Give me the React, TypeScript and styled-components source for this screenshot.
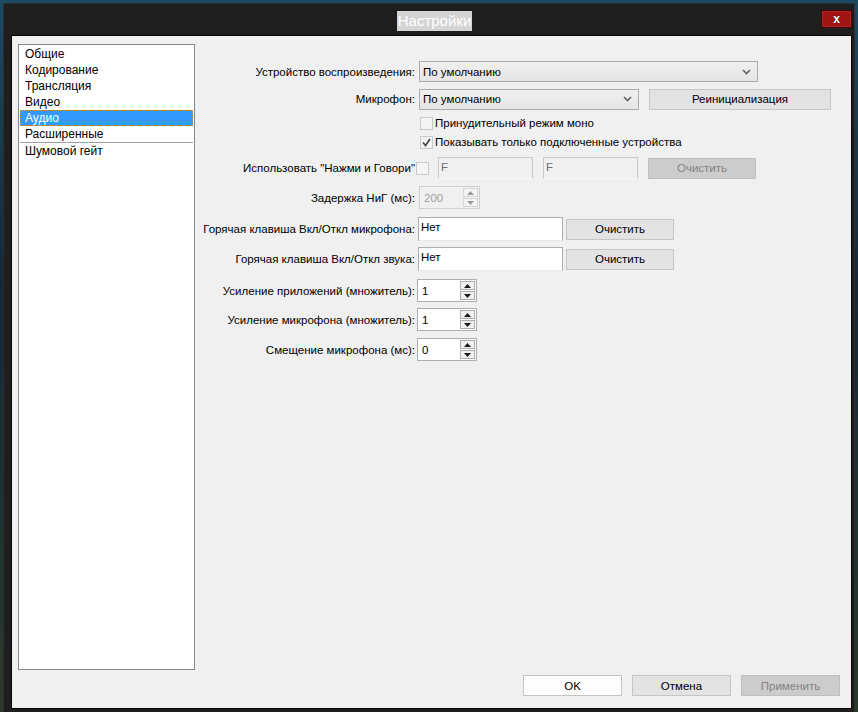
import styled, { createGlobalStyle } from 'styled-components';

const GlobalStyle = createGlobalStyle`
  html, body {
    margin: 0;
    padding: 0;
    width: 858px;
    height: 712px;
    overflow: hidden;
    background: linear-gradient(180deg, #1c4a63 0%, #13283a 40%, #2a3a2a 100%);
    font-family: "Liberation Sans", Arial, sans-serif;
    font-size: 11px;
    color: #000;
  }
  * {
    box-sizing: border-box;
  }
`;

const Window = styled.div`
  margin: 3px 3px 0 3px;
  width: 852px;
  height: 709px;
  background: #1e1e1e;
  border: 1px solid #2e2e2e;
  border-bottom: none;
  display: flex;
  flex-direction: column;
  padding: 0 2px 3px 7px;
`;

const TitleBar = styled.div`
  height: 31px;
  display: grid;
  grid-template-columns: 1fr auto 1fr;
  align-items: start;
  padding-left: 6px;
`;

const Title = styled.div`
  grid-column: 2;
  margin-top: 7px;
  height: 20px;
  padding: 0 1px;
  background: #d4d4d4;
  color: #fff;
  font-size: 15px;
  line-height: 20px;
`;

const CloseButton = styled.div`
  grid-column: 3;
  justify-self: end;
  margin-top: 6px;
  width: 31px;
  height: 18px;
  background: #a01414;
  border: 1px solid #3c0606;
  box-shadow: inset 0 0 0 1px #b52222;
  color: #fff;
  font-weight: bold;
  font-size: 12px;
  display: flex;
  align-items: center;
  justify-content: center;
  text-shadow: 0 0 1px #000;
`;

const Content = styled.div`
  flex: 1;
  background: #f0f0f0;
  border: 1px solid #050505;
  display: flex;
  flex-direction: column;
`;

const Main = styled.div`
  flex: 1;
  display: flex;
  padding: 8px 0 0 6px;
  min-height: 0;
`;

const SideList = styled.div`
  width: 177px;
  background: #fff;
  border: 1px solid #828790;
  padding: 1px;
  display: flex;
  flex-direction: column;
`;

const ListItem = styled.div<{ $selected?: boolean }>`
  height: 16px;
  line-height: 14px;
  padding-left: 4px;
  font-size: 12px;
  color: ${(p) => (p.$selected ? '#fff' : '#000')};
  background: ${(p) => (p.$selected ? '#3399ff' : 'transparent')};
  border: 1px ${(p) => (p.$selected ? 'dotted #c98a4a' : 'solid transparent')};
`;

const ListSeparator = styled.div`
  height: 1px;
  background: #a0a0a0;
`;

const Form = styled.div`
  display: flex;
  flex-direction: column;
  padding-top: 17px;
`;

const Row = styled.div<{ $h: number; $mt: number }>`
  display: flex;
  align-items: center;
  height: ${(p) => p.$h}px;
  margin-top: ${(p) => p.$mt}px;
`;

const Label = styled.div`
  width: 224px;
  padding-right: 4px;
  text-align: right;
  white-space: nowrap;
  font-size: 11.5px;
`;

const Combo = styled.div<{ $w: number }>`
  width: ${(p) => p.$w}px;
  height: 21px;
  border: 1px solid #acacac;
  background: linear-gradient(180deg, #f0f0f0 0%, #e5e5e5 100%);
  display: flex;
  align-items: center;
  justify-content: space-between;
  padding: 0 6px 0 3px;
  font-size: 11.5px;
`;

const Button = styled.div<{ $w: number; $h?: number; $variant?: 'normal' | 'default' | 'disabled'; $ml?: number }>`
  width: ${(p) => p.$w}px;
  height: ${(p) => p.$h ?? 21}px;
  margin-left: ${(p) => p.$ml ?? 0}px;
  display: flex;
  align-items: center;
  justify-content: center;
  font-size: 11.5px;
  border: 1px solid
    ${(p) => (p.$variant === 'disabled' ? '#bfbfbf' : p.$variant === 'default' ? '#c4c4c4' : '#c6c6c6')};
  background: ${(p) => (p.$variant === 'disabled' ? '#cccccc' : p.$variant === 'default' ? '#fdfdfd' : '#e3e3e3')};
  color: ${(p) => (p.$variant === 'disabled' ? '#838383' : '#000')};
`;

const CheckRow = styled.div<{ $mt: number }>`
  display: flex;
  align-items: center;
  height: 16px;
  margin-top: ${(p) => p.$mt}px;
  padding-left: 225px;
  gap: 2px;
  font-size: 11.5px;
`;

const CheckBox = styled.div<{ $ml?: number }>`
  width: 13px;
  height: 13px;
  margin-left: ${(p) => p.$ml ?? 0}px;
  border: 1px solid #c9c9c9;
  background: #f4f4f4;
  display: flex;
  align-items: center;
  justify-content: center;
  flex-shrink: 0;
`;

const TextField = styled.div<{ $w: number; $h: number; $disabled?: boolean; $ml?: number }>`
  width: ${(p) => p.$w}px;
  height: ${(p) => p.$h}px;
  margin-left: ${(p) => p.$ml ?? 0}px;
  border: 1px solid ${(p) => (p.$disabled ? '#cacaca' : '#abadb3')};
  border-bottom-color: ${(p) => (p.$disabled ? '#f8f8f8' : '#e3e9ef')};
  background: ${(p) => (p.$disabled ? '#f0f0f0' : '#fff')};
  color: ${(p) => (p.$disabled ? '#6d6d78' : '#000')};
  padding: 2px 0 0 2px;
  line-height: 14px;
  font-size: 11.5px;
`;

const Spin = styled.div<{ $w: number; $disabled?: boolean; $ml?: number }>`
  width: ${(p) => p.$w}px;
  height: 23px;
  margin-left: ${(p) => p.$ml ?? 0}px;
  border: 1px solid ${(p) => (p.$disabled ? '#cfcfcf' : '#abadb3')};
  background: ${(p) => (p.$disabled ? '#f0f0f0' : '#fff')};
  color: ${(p) => (p.$disabled ? '#a0a0a0' : '#000')};
  display: flex;
  align-items: center;
  justify-content: space-between;
  padding: 1px 1px 1px 4px;
  font-size: 11.5px;
`;

const SpinButtons = styled.div`
  display: flex;
  flex-direction: column;
  gap: 1px;
  width: 15px;
  height: 19px;
`;

const SpinBtn = styled.div<{ $disabled?: boolean }>`
  flex: 1;
  border: 1px solid ${(p) => (p.$disabled ? '#d5d5d5' : '#adadad')};
  background: ${(p) => (p.$disabled ? '#f4f4f4' : '#f0f0f0')};
  display: flex;
  align-items: center;
  justify-content: center;
`;

const Footer = styled.div`
  display: flex;
  justify-content: flex-end;
  gap: 10px;
  padding: 5px 11px 12px 0;
`;

function Chevron() {
  return (
    <svg width="9" height="6" viewBox="0 0 9 6">
      <path d="M1 1 L4.5 4.5 L8 1" stroke="#606060" strokeWidth="1.6" fill="none" />
    </svg>
  );
}

function Check() {
  return (
    <svg width="9" height="9" viewBox="0 0 9 9">
      <path d="M1 4.5 L3.5 7.5 L8 1" stroke="#4a4a4a" strokeWidth="1.8" fill="none" />
    </svg>
  );
}

function Arrow({ up, disabled }: { up?: boolean; disabled?: boolean }) {
  return (
    <svg width="7" height="4" viewBox="0 0 7 4">
      <path d={up ? 'M0 4 L3.5 0 L7 4 Z' : 'M0 0 L3.5 4 L7 0 Z'} fill={disabled ? '#9a9a9a' : '#1a1a1a'} />
    </svg>
  );
}

function SpinBox({ value, w, disabled, ml }: { value: string; w: number; disabled?: boolean; ml?: number }) {
  return (
    <Spin $w={w} $disabled={disabled} $ml={ml}>
      <span>{value}</span>
      <SpinButtons>
        <SpinBtn $disabled={disabled}>
          <Arrow up disabled={disabled} />
        </SpinBtn>
        <SpinBtn $disabled={disabled}>
          <Arrow disabled={disabled} />
        </SpinBtn>
      </SpinButtons>
    </Spin>
  );
}

const sections = ['Общие', 'Кодирование', 'Трансляция', 'Видео', 'Аудио', 'Расширенные'];

export default function App() {
  return (
    <>
      <GlobalStyle />
      <Window>
        <TitleBar>
          <Title>Настройки</Title>
          <CloseButton>x</CloseButton>
        </TitleBar>
        <Content>
          <Main>
            <SideList>
              {sections.map((s) => (
                <ListItem key={s} $selected={s === 'Аудио'}>
                  {s}
                </ListItem>
              ))}
              <ListSeparator />
              <ListItem>Шумовой гейт</ListItem>
            </SideList>
            <Form>
              <Row $h={21} $mt={0}>
                <Label>Устройство воспроизведения:</Label>
                <Combo $w={339}>
                  <span>По умолчанию</span>
                  <Chevron />
                </Combo>
              </Row>
              <Row $h={22} $mt={6}>
                <Label>Микрофон:</Label>
                <Combo $w={220}>
                  <span>По умолчанию</span>
                  <Chevron />
                </Combo>
                <Button $w={182} $ml={10}>
                  Реинициализация
                </Button>
              </Row>
              <CheckRow $mt={5}>
                <CheckBox />
                <span>Принудительный режим моно</span>
              </CheckRow>
              <CheckRow $mt={3}>
                <CheckBox>
                  <Check />
                </CheckBox>
                <span>Показывать только подключенные устройства</span>
              </CheckRow>
              <Row $h={22} $mt={7}>
                <Label>Использовать "Нажми и Говори"</Label>
                <CheckBox $ml={-3} />
                <TextField $w={95} $h={22} $disabled $ml={9}>
                  F
                </TextField>
                <TextField $w={95} $h={22} $disabled $ml={10}>
                  F
                </TextField>
                <Button $w={108} $h={21} $variant="disabled" $ml={10}>
                  Очистить
                </Button>
              </Row>
              <Row $h={23} $mt={7}>
                <Label>Задержка НиГ (мс):</Label>
                <SpinBox value="200" w={61} disabled />
              </Row>
              <Row $h={24} $mt={8}>
                <Label>Горячая клавиша Вкл/Откл микрофона:</Label>
                <TextField $w={145} $h={24} $ml={-1}>
                  Нет
                </TextField>
                <Button $w={108} $h={21} $ml={3}>
                  Очистить
                </Button>
              </Row>
              <Row $h={24} $mt={6}>
                <Label>Горячая клавиша Вкл/Откл звука:</Label>
                <TextField $w={145} $h={24} $ml={-1}>
                  Нет
                </TextField>
                <Button $w={108} $h={21} $ml={3}>
                  Очистить
                </Button>
              </Row>
              <Row $h={23} $mt={8}>
                <Label>Усиление приложений (множитель):</Label>
                <SpinBox value="1" w={60} ml={-2} />
              </Row>
              <Row $h={23} $mt={6}>
                <Label>Усиление микрофона (множитель):</Label>
                <SpinBox value="1" w={60} ml={-2} />
              </Row>
              <Row $h={23} $mt={7}>
                <Label>Смещение микрофона (мс):</Label>
                <SpinBox value="0" w={60} ml={-2} />
              </Row>
            </Form>
          </Main>
          <Footer>
            <Button $w={99} $variant="default">
              OK
            </Button>
            <Button $w={99}>Отмена</Button>
            <Button $w={99} $variant="disabled">
              Применить
            </Button>
          </Footer>
        </Content>
      </Window>
    </>
  );
}
